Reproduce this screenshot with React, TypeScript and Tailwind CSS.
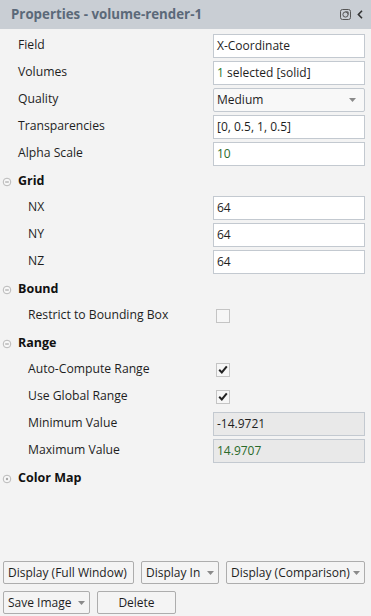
import React from "react";

const font = { fontFamily: '"Open Sans", "Noto Sans", sans-serif' };

function Row({ label, indent = false, children }: { label: string; indent?: boolean; children: React.ReactNode }) {
  return (
    <div className="flex h-[27px] items-center">
      <div className={`${indent ? "pl-[28px]" : "pl-[18px]"} w-[213px] shrink-0 text-[12.2px] text-[#1e1e1e]`}>{label}</div>
      {children}
    </div>
  );
}

function Input({ children, ro = false }: { children: React.ReactNode; ro?: boolean }) {
  return (
    <div
      className={`flex h-[24px] w-[152px] items-center border border-[#c3c9d0] px-[3px] text-[12px] text-[#1e1e1e] ${
        ro ? "bg-[#e9e9e9]" : "bg-white"
      }`}
    >
      {children}
    </div>
  );
}

function Check({ checked }: { checked: boolean }) {
  return (
    <div className="ml-[3px] flex h-[14px] w-[14px] items-center justify-center border border-[#c4c4c4] bg-[#f6f6f6]">
      {checked && (
        <svg width="10" height="9" viewBox="0 0 10 9">
          <path d="M1.2 4.8 L3.8 7.4 L8.8 1.4" fill="none" stroke="#222" strokeWidth="2" />
        </svg>
      )}
    </div>
  );
}

function Section({ label, open = true }: { label: string; open?: boolean }) {
  return (
    <div className="flex h-[27px] items-center pt-[2px]">
      <svg width="18" height="10" viewBox="0 0 18 10" className="shrink-0">
        <circle cx="7" cy="5" r="3.8" fill="#f7f7f7" stroke="#b9b9b9" strokeWidth="1" />
        {open ? (
          <line x1="5.2" y1="5" x2="8.8" y2="5" stroke="#9a9a9a" strokeWidth="1" />
        ) : (
          <circle cx="7" cy="5" r="1.2" fill="#a8a8a8" />
        )}
      </svg>
      <span className="text-[12.5px] font-bold text-[#111]">{label}</span>
    </div>
  );
}

function Caret() {
  return (
    <svg width="7" height="4" viewBox="0 0 7 4" className="shrink-0">
      <path d="M0 0 L7 0 L3.5 4 Z" fill="#8a8a8a" />
    </svg>
  );
}

function Btn({ w, children, caret = false, center = false }: { w: string; children: React.ReactNode; caret?: boolean; center?: boolean }) {
  return (
    <div
      className={`flex h-[23px] ${w} items-center ${center ? "justify-center" : "justify-between"} rounded-[2px] border border-[#adadad] bg-[#f4f4f4] pl-[4px] pr-[4px] text-[12px] text-[#1e1e1e]`}
    >
      <span className="whitespace-nowrap">{children}</span>
      {caret && <Caret />}
    </div>
  );
}

export default function App() {
  return (
    <div className="flex h-[616px] w-[371px] flex-col bg-[#f3f3f3]" style={font}>
      <div className="flex h-[29px] shrink-0 items-center justify-between bg-[#c9ced4] pl-[11px] pr-[8px]">
        <span className="text-[13.3px] font-bold text-[#5b6979]">Properties - volume-render-1</span>
        <div className="flex items-center gap-[6px]">
          <svg width="11" height="11" viewBox="0 0 11 11">
            <rect x="0.5" y="0.5" width="10" height="10" rx="2" fill="none" stroke="#555" strokeWidth="1" />
            <circle cx="5.5" cy="5.5" r="2.6" fill="none" stroke="#555" strokeWidth="1" />
            <path d="M5.5 2.9 L8.1 2.9 L8.1 5.5" fill="none" stroke="#555" strokeWidth="1" />
          </svg>
          <svg width="6" height="9" viewBox="0 0 6 9">
            <path d="M5 0.8 L1.4 4.5 L5 8.2" fill="none" stroke="#333" strokeWidth="1.6" />
          </svg>
        </div>
      </div>
      <div className="flex flex-col pt-[3px]">
        <Row label="Field">
          <Input>X-Coordinate</Input>
        </Row>
        <Row label="Volumes">
          <Input>
            <span className="text-[#2a7a2a]">1</span>&nbsp;selected [solid]
          </Input>
        </Row>
        <Row label="Quality">
          <div className="flex h-[24px] w-[152px] items-center justify-between rounded-[2px] border border-[#c3c9d0] bg-[#f8f8f8] pl-[3px] pr-[8px] text-[12px] text-[#1e1e1e]">
            <span>Medium</span>
            <Caret />
          </div>
        </Row>
        <Row label="Transparencies">
          <Input>[0, 0.5, 1, 0.5]</Input>
        </Row>
        <Row label="Alpha Scale">
          <Input>
            <span className="text-[#2a6a2a]">10</span>
          </Input>
        </Row>
        <Section label="Grid" />
        <Row label="NX" indent>
          <Input>64</Input>
        </Row>
        <Row label="NY" indent>
          <Input>64</Input>
        </Row>
        <Row label="NZ" indent>
          <Input>64</Input>
        </Row>
        <Section label="Bound" />
        <Row label="Restrict to Bounding Box" indent>
          <Check checked={false} />
        </Row>
        <Section label="Range" />
        <Row label="Auto-Compute Range" indent>
          <Check checked />
        </Row>
        <Row label="Use Global Range" indent>
          <Check checked />
        </Row>
        <Row label="Minimum Value" indent>
          <Input ro>-14.9721</Input>
        </Row>
        <Row label="Maximum Value" indent>
          <Input ro>
            <span className="text-[#2a6a2a]">14.9707</span>
          </Input>
        </Row>
        <Section label="Color Map" open={false} />
      </div>
      <div className="flex-1" />
      <div className="flex flex-col gap-[7px] pb-[2px] pl-[3px]">
        <div className="flex gap-[7px]">
          <Btn w="w-[131px]">Display (Full Window)</Btn>
          <Btn w="w-[78px]" caret>
            Display In
          </Btn>
          <Btn w="w-[139px]" caret>
            Display (Comparison)
          </Btn>
        </div>
        <div className="flex gap-[7px]">
          <Btn w="w-[87px]" caret>
            Save Image
          </Btn>
          <Btn w="w-[79px]" center>
            Delete
          </Btn>
        </div>
      </div>
    </div>
  );
}
